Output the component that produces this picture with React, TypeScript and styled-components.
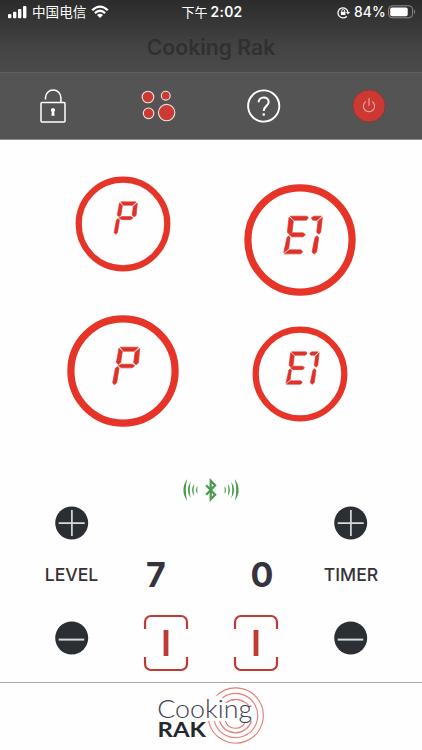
import React from "react";
import styled, { createGlobalStyle } from "styled-components";

const GlobalStyle = createGlobalStyle`
  * { box-sizing: border-box; }
  body { margin: 0; background: #fefefe; }
  svg { display: block; flex: none; }
`;

const sans = `Inter, "Noto Sans CJK SC", sans-serif`;

const Screen = styled.div`
  width: 422px;
  height: 750px;
  display: flex;
  flex-direction: column;
  overflow: hidden;
  background: #fefefe;
  font-family: ${sans};
`;

const Header = styled.header`
  height: 72px;
  background: linear-gradient(#2b2b2b 0, #343434 18px, #444 48px, #4a4a4a 72px);
`;

const StatusBar = styled.div`
  height: 24px;
  display: grid;
  grid-template-columns: 1fr auto 1fr;
  align-items: center;
  padding: 0 6px 0 8px;
  color: #fff;
  font-size: 14px;
  line-height: 24px;
  white-space: nowrap;
`;

const StatusGroup = styled.div<{ $end?: boolean; $gap: number }>`
  display: flex;
  align-items: center;
  gap: ${(p) => p.$gap}px;
  justify-content: ${(p) => (p.$end ? "flex-end" : "flex-start")};
`;

const Carrier = styled.span`
  font-size: 13.6px;
  font-weight: 400;
`;

const Clock = styled.span`
  display: flex;
  gap: 3px;
  font-size: 13.8px;
  font-weight: 600;
  letter-spacing: 0.3px;
`;

const DayPart = styled.span`
  font-size: 13px;
  font-weight: 400;
  letter-spacing: 0;
`;

const Percent = styled.span`
  font-size: 13.8px;
  font-weight: 500;
  letter-spacing: 0.2px;
`;

const Title = styled.h1`
  margin: 8px 0 0;
  text-align: center;
  font-size: 21.2px;
  line-height: 30px;
  font-weight: 600;
  color: #303030;
`;

const Toolbar = styled.nav`
  height: 68px;
  display: grid;
  grid-template-columns: repeat(4, 1fr);
  background: #545454;
  border-top: 1px solid #606060;
  border-bottom: 1px solid #8d8d8d;
`;

const ToolButton = styled.button`
  display: flex;
  align-items: center;
  justify-content: center;
  padding: 0;
  border: 0;
  background: none;
`;

const Main = styled.main`
  height: 542px;
`;

const Burners = styled.section`
  height: 338px;
  display: grid;
  grid-template-columns: 177px 177px;
  padding-left: 34px;
`;

const BurnerColumn = styled.div<{ $top: number; $gap: number }>`
  display: flex;
  flex-direction: column;
  align-items: center;
  padding-top: ${(p) => p.$top}px;
  gap: ${(p) => p.$gap}px;
`;

const Signal = styled.div`
  display: flex;
  justify-content: center;
  height: 28px;
`;

const ControlRow = styled.div<{ $height: number }>`
  height: ${(p) => p.$height}px;
  display: grid;
  grid-template-columns: 95px 94px 86px 104px;
  padding-left: 24px;
  justify-items: center;
  align-items: center;
`;

const RoundButton = styled.button<{ $column: number; $raise?: number }>`
  grid-column: ${(p) => p.$column};
  padding: 0;
  border: 0;
  background: none;
  margin-bottom: ${(p) => p.$raise ?? 0}px;
`;

const Label = styled.span`
  font-size: 17.6px;
  line-height: 24px;
  font-weight: 500;
  color: #333238;
`;

const Value = styled.span<{ $left?: number; $right?: number }>`
  font-size: 34px;
  line-height: 40px;
  font-weight: 700;
  color: #35333e;
  padding-left: ${(p) => p.$left ?? 0}px;
  padding-right: ${(p) => p.$right ?? 0}px;
`;

const Footer = styled.footer`
  height: 68px;
  border-top: 1px solid #a9a9a9;
  display: flex;
  justify-content: center;
  padding-top: 2px;
`;

const SEGMENTS = {
  E1: [
    "-29,-72 22,-72 26,-67 20,-60 -17,-60",
    "-32,-69 -19,-58 -23,-24 -31,-18 -37,-24",
    "-31,-16 -23,-22 11,-22 17,-16 10,-10 -24,-10",
    "-38,-8 -33,-13 -29,-8 -33,25 -48,38",
    "-46,41 -32,29 4,29 9,35 3,41",
    "35,-67 42,-72 65,-72 52,-60 39,-60",
    "68,-69 63,-24 57,-18 51,-24 55,-57",
    "46,-8 51,-13 57,-8 51,35 43,42 37,35",
  ],
  P: [
    "-7,-72 47,-72 35,-60 2,-60",
    "-11,-69 -1,-59 -6,-26 -13,-20 -19,-26",
    "51,-68 47,-25 40,-19 33,-26 37,-57",
    "-13,-16 -4,-21 29,-21 36,-16 28,-10 -4,-10",
    "-22,-9 -16,-14 -11,-9 -18,35 -25,41 -30,35",
  ],
};

function Burner({ code, size }: { code: keyof typeof SEGMENTS; size: "small" | "large" }) {
  const large = size === "large";
  const d = large ? 112 : 96;
  const k = large ? 1 / 3 : 0.86 / 3;
  return (
    <svg width={d} height={d} viewBox={`${-d / 2} ${-d / 2} ${d} ${d}`} aria-label={code}>
      <circle r={large ? 52.1 : 44.3} fill="none" stroke="#e63429" strokeWidth={large ? 7.2 : 6.2} />
      <g transform={`translate(-0.3 ${large ? 0.2 : -1.5}) scale(${k})`} fill="#de3229" stroke="#de3229" strokeWidth="2" strokeLinejoin="round">
        {SEGMENTS[code].map((points) => (
          <polygon key={points} points={points} />
        ))}
      </g>
    </svg>
  );
}

function RoundIcon({ plus }: { plus?: boolean }) {
  return (
    <svg width="34" height="34" viewBox="-16.7 -17 34 34">
      <circle r="16.5" fill="#2b2e33" />
      <path d={plus ? "M-13 .2H13M.2-13V13" : "M-13 1.6H12.5"} stroke="#d6dcdc" strokeWidth={plus ? 1.7 : 2} />
    </svg>
  );
}

function ZoneBracket() {
  return (
    <svg width="46" height="58" viewBox="0 0 46 58" fill="none" stroke="#bf3a34">
      <path d="M2 15V8a6 6 0 0 1 6-6H38a6 6 0 0 1 6 6V15M2 43v7a6 6 0 0 0 6 6H38a6 6 0 0 0 6-6V43" strokeWidth="2.2" />
      <path d="M23 16V42" strokeWidth="4.8" />
    </svg>
  );
}

function SignalBars() {
  return (
    <svg width="19" height="14" viewBox="0 0 19 14" fill="#fff">
      <rect x="0" y="9" width="3.4" height="4.3" rx="1" />
      <rect x="5" y="6.7" width="3.4" height="6.6" rx="1" />
      <rect x="10" y="3.9" width="3.4" height="9.4" rx="1" />
      <rect x="15" y="1" width="3.4" height="12.3" rx="1" />
    </svg>
  );
}

function Wifi() {
  return (
    <svg width="18" height="14" viewBox="0 0 18 14" fill="none" stroke="#fff" strokeWidth="2.2">
      <path d="M1.2 5.3Q9-2 16.8 5.3M3.9 8.1Q9 3.4 14.1 8.1" />
      <path d="M6 9.9Q9 7.6 12 9.9L9 13Z" fill="#fff" stroke="none" />
    </svg>
  );
}

function RotationLock() {
  return (
    <svg width="13" height="13" viewBox="0 0 13 13" fill="none" stroke="#fff">
      <path d="M9.8 10.2A5 5 0 1 1 11 6.5" strokeWidth="1.3" />
      <path d="M9 6h4L11 8.6Z" fill="#fff" stroke="none" />
      <path d="M4.7 6V5a1.5 1.5 0 0 1 3 0v1" strokeWidth=".9" />
      <rect x="3.9" y="5.7" width="4.6" height="3.4" rx=".5" fill="#fff" stroke="none" />
    </svg>
  );
}

function Battery() {
  return (
    <svg width="28" height="14" viewBox="0 0 28 14">
      <rect x=".6" y=".8" width="24" height="12" rx="3.6" fill="none" stroke="#8e8e8e" />
      <rect x="2.2" y="2.4" width="17.5" height="8.8" rx="1.8" fill="#fff" />
      <path d="M26 4.6q2 2.2 0 4.6Z" fill="#8e8e8e" />
    </svg>
  );
}

function LockIcon() {
  return (
    <svg width="26" height="34" viewBox="0 0 26 34" fill="none" stroke="#fff" strokeWidth="1.5">
      <rect x="1" y="13.5" width="24" height="19.5" rx="1" />
      <path d="M5.5 10.5V8.6a7.7 7.7 0 0 1 15.4 0v4.7" />
      <path d="M13 19a2.2 2.2 0 0 1 1.2 4l.4 3.8h-3.2l.4-3.8a2.2 2.2 0 0 1 1.2-4Z" fill="#fff" stroke="none" />
    </svg>
  );
}

function ZonesIcon() {
  return (
    <svg width="36" height="34" viewBox="140.25 89 36 34" fill="#cb3a33" stroke="#f3e2df" strokeWidth="1.1">
      <circle cx="148.2" cy="97" r="5.8" />
      <circle cx="166" cy="95.7" r="4.4" />
      <circle cx="148.8" cy="113.3" r="5.3" />
      <circle cx="166.9" cy="112.6" r="8.2" />
    </svg>
  );
}

function HelpIcon() {
  return (
    <svg width="34" height="34" viewBox="-16.7 -17 34 34" fill="none" stroke="#fff">
      <circle r="15.6" strokeWidth="1.9" />
      <path d="M-5.1-3.7C-5.1-10.2 5-10.2 5-3.9C5 0 0-.1 0 5.1" strokeWidth="2" />
      <rect x="-1.1" y="7.3" width="2.2" height="2.4" fill="#fff" stroke="none" />
    </svg>
  );
}

function PowerIcon() {
  return (
    <svg width="34" height="34" viewBox="-17 -17 34 34" fill="none">
      <circle r="16.2" fill="#cb3932" stroke="#743b38" strokeWidth=".8" />
      <path d="M-3-4.6A5.6 5.6 0 1 0 3-4.6M0-7.7V-.2" stroke="#f0aaa5" strokeWidth="1.1" />
    </svg>
  );
}

function BluetoothSignal() {
  return (
    <svg width="56" height="24" viewBox="-28 -12 56 24" fill="none" stroke="#4b9b4e">
      <path d="M-4.8-4.7 4.2 4.8-.3 9.3V-9.3L4.2-4.8-4.8 4.7" strokeWidth="2.2" />
      {[1, -1].map((side) => (
        <g key={side} transform={`scale(${side} 1)`} fill="#4b9b4e" stroke="none">
          <path d="M23.8-11Q31.4 0 23.8 11Q26.6 0 23.8-11Z" />
          <path d="M20.3-8.2Q26 0 20.3 8.2Q22.2 0 20.3-8.2Z" />
          <path d="M16.9-6Q21 0 16.9 6Q18 0 16.9-6Z" />
          <path d="M13.5-4Q16.5 0 13.5 4Q14 0 13.5-4Z" />
        </g>
      ))}
    </svg>
  );
}

function Logo() {
  return (
    <svg width="110" height="62" viewBox="156 685 110 62">
      <g fill="none" stroke="#e27f77" strokeWidth="1.1">
        <path d="M216.6 695.6A27.6 27.6 0 1 1 208.6 720.8" />
        <path d="M222.3 697.9A22.1 22.1 0 1 1 214.2 720.8" />
        <path d="M226 702.7A16.3 16.3 0 0 1 248.5 705.4M251.4 721A16.6 16.6 0 0 1 219.6 721" />
        <path d="M231.5 700.4Q237 698 244 702M245.5 721.5A10.7 10.7 0 0 1 225.4 721" />
      </g>
      <text x="157.2" y="717.8" textLength="95" lengthAdjust="spacingAndGlyphs" fontFamily="Lato, sans-serif" fontWeight="300" fontSize="24.5" fill="#3c414c">
        Cooking
      </text>
      <text x="157.6" y="736.8" textLength="48.4" lengthAdjust="spacingAndGlyphs" fontFamily="Lato, sans-serif" fontWeight="700" fontSize="21.5" fill="#25282c">
        RAK
      </text>
    </svg>
  );
}

export default function App() {
  return (
    <>
      <GlobalStyle />
      <Screen>
        <Header>
          <StatusBar>
            <StatusGroup $gap={5}>
              <SignalBars />
              <Carrier>中国电信</Carrier>
              <Wifi />
            </StatusGroup>
            <Clock><DayPart>下午</DayPart>2:02</Clock>
            <StatusGroup $end $gap={4}>
              <RotationLock />
              <StatusGroup $gap={2}>
                <Percent>84%</Percent>
                <Battery />
              </StatusGroup>
            </StatusGroup>
          </StatusBar>
          <Title>Cooking Rak</Title>
        </Header>
        <Toolbar>
          <ToolButton aria-label="Lock"><LockIcon /></ToolButton>
          <ToolButton aria-label="Zones"><ZonesIcon /></ToolButton>
          <ToolButton aria-label="Help"><HelpIcon /></ToolButton>
          <ToolButton aria-label="Power"><PowerIcon /></ToolButton>
        </Toolbar>
        <Main>
          <Burners>
            <BurnerColumn $top={36.3} $gap={42.4}>
              <Burner code="P" size="small" />
              <Burner code="P" size="large" />
            </BurnerColumn>
            <BurnerColumn $top={44.3} $gap={30}>
              <Burner code="E1" size="large" />
              <Burner code="E1" size="small" />
            </BurnerColumn>
          </Burners>
          <Signal><BluetoothSignal /></Signal>
          <ControlRow $height={34}>
            <RoundButton $column={1} aria-label="Raise level"><RoundIcon plus /></RoundButton>
            <RoundButton $column={4} aria-label="Raise timer"><RoundIcon plus /></RoundButton>
          </ControlRow>
          <ControlRow $height={70}>
            <Label>LEVEL</Label>
            <Value $right={20}>7</Value>
            <Value $left={12}>0</Value>
            <Label>TIMER</Label>
          </ControlRow>
          <ControlRow $height={65}>
            <RoundButton $column={1} $raise={10} aria-label="Lower level"><RoundIcon /></RoundButton>
            <ZoneBracket />
            <ZoneBracket />
            <RoundButton $column={4} $raise={10} aria-label="Lower timer"><RoundIcon /></RoundButton>
          </ControlRow>
        </Main>
        <Footer><Logo /></Footer>
      </Screen>
    </>
  );
}
